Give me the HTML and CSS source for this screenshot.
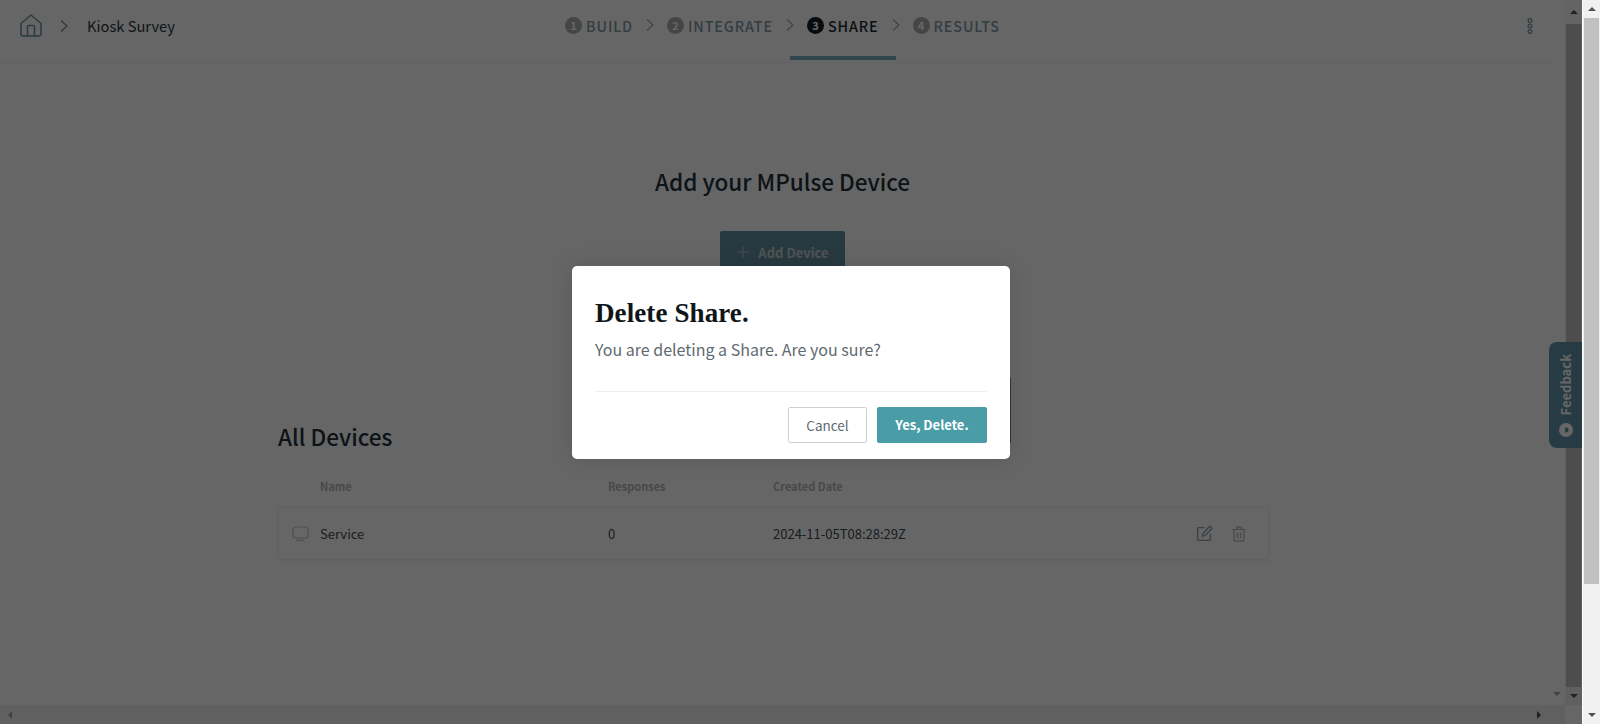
FILE: index.html
```html
<!DOCTYPE html>
<html lang="en">
<head>
<meta charset="utf-8">
<title>Kiosk Survey</title>
<link rel="stylesheet" href="styles.css">
</head>
<body>
<div class="viewport">
  <div class="viewport-main">
    <div class="app">
      <header class="topbar">
        <div class="crumbs">
          <svg class="home-icon" viewBox="0 0 22 23" width="22" height="23" fill="none" stroke="#6f92a3" stroke-width="1.5" stroke-linejoin="round"><path d="M1 9.5 11 1l10 8.5V20a2 2 0 0 1-2 2H3a2 2 0 0 1-2-2z"/><path d="M7.5 22V12.5a1 1 0 0 1 1-1h5a1 1 0 0 1 1 1V22"/></svg>
          <svg class="crumb-chev" viewBox="0 0 8 12" width="8" height="12" fill="none" stroke="#6f8390" stroke-width="1.1"><path d="M1 .5 7 6l-6 5.5"/></svg>
          <span class="crumb-title">Kiosk Survey</span>
        </div>
        <nav class="steps">
          <div class="step"><span class="step-num">1</span><span class="step-label">BUILD</span></div>
          <svg class="step-chev" viewBox="0 0 8 12" width="8" height="12" fill="none" stroke="#95a3ab" stroke-width="1.1"><path d="M1 .5 7 6l-6 5.5"/></svg>
          <div class="step"><span class="step-num">2</span><span class="step-label">INTEGRATE</span></div>
          <svg class="step-chev" viewBox="0 0 8 12" width="8" height="12" fill="none" stroke="#95a3ab" stroke-width="1.1"><path d="M1 .5 7 6l-6 5.5"/></svg>
          <div class="step step-active"><span class="step-num">3</span><span class="step-label">SHARE</span></div>
          <svg class="step-chev" viewBox="0 0 8 12" width="8" height="12" fill="none" stroke="#95a3ab" stroke-width="1.1"><path d="M1 .5 7 6l-6 5.5"/></svg>
          <div class="step"><span class="step-num">4</span><span class="step-label">RESULTS</span></div>
        </nav>
        <svg class="kebab" viewBox="0 0 6 16" width="6" height="16" fill="none" stroke="#7397a8" stroke-width="1.2"><circle cx="3" cy="2.5" r="1.9"/><circle cx="3" cy="8" r="1.9"/><circle cx="3" cy="13.5" r="1.9"/></svg>
      </header>
      <section class="add-section">
        <h2 class="add-title">Add your MPulse Device</h2>
        <button class="add-btn"><svg viewBox="0 0 14 14" width="14" height="14" fill="none" stroke="#b9c4c9" stroke-width="1"><path d="M7 1v12M1 7h12"/></svg>Add Device</button>
      </section>
      <section class="devices">
        <h2 class="devices-title">All Devices</h2>
        <div class="table-head">
          <span class="col-name">Name</span>
          <span class="col-resp">Responses</span>
          <span class="col-date">Created Date</span>
        </div>
        <div class="table-row">
          <svg class="monitor" viewBox="0 0 17 16" width="17" height="16" fill="none" stroke="#c2c4c6" stroke-width="1.2"><rect x="1" y="1" width="15" height="11" rx="2.5"/><path d="M4.5 14.5c1-.6 7-.6 8 0"/></svg>
          <span class="cell-name">Service</span>
          <span class="cell-resp">0</span>
          <span class="cell-date">2024-11-05T08:28:29Z</span>
          <span class="row-actions">
            <svg viewBox="0 0 16 16" width="17" height="17" fill="none" stroke="#8aa0ab" stroke-width="1.2"><path d="M8 2.5H2.5a1 1 0 0 0-1 1v10a1 1 0 0 0 1 1h10a1 1 0 0 0 1-1V8"/><path d="M6 10.5l.6-2.6L13 1.2l2 2-6.4 6.7z"/></svg>
            <svg viewBox="0 0 14 16" width="14" height="16" fill="none" stroke="#b0b4b7" stroke-width="1.2"><path d="M.5 3.5h13M5 3.5V1.2h4v2.3M2 3.5V14a1.2 1.2 0 0 0 1.2 1.2h7.6A1.2 1.2 0 0 0 12 14V3.5M5.5 6.5v6M8.5 6.5v6"/></svg>
          </span>
        </div>
      </section>
    </div>
    <div class="bar inner-bar">
      <div class="bar-btn"><span class="arrow-up"></span></div>
      <div class="bar-thumb"></div>
      <div class="bar-btn"><span class="arrow-down"></span></div>
    </div>
  </div>
  <div class="hbar"><span class="arrow-left"></span><span class="arrow-right"></span></div>
  <span class="pane-arrow"></span>
  <div class="behind-modal"></div>
  <aside class="feedback">
    <span class="feedback-text">Feedback</span>
    <svg class="feedback-face" viewBox="0 0 14 14" width="14" height="14"><circle cx="7" cy="7" r="7" fill="#fff"/><path d="M6 4.5h1.2a2.5 2.5 0 0 1 0 5H6z" fill="#5f94a8"/></svg>
  </aside>
  <div class="overlay">
    <div class="modal">
      <h3 class="modal-title">Delete Share.</h3>
      <p class="modal-text">You are deleting a Share. Are you sure?</p>
      <div class="modal-actions">
        <button class="btn btn-cancel">Cancel</button>
        <button class="btn btn-yes">Yes, Delete.</button>
      </div>
    </div>
  </div>
</div>
<div class="bar outer-bar">
  <div class="bar-btn"><span class="arrow-up"></span></div>
  <div class="bar-thumb outer-thumb"></div>
  <div class="bar-spacer"></div>
  <div class="bar-btn"><span class="arrow-down"></span></div>
</div>
</body>
</html>
```
FILE: styles.css
```css
* { box-sizing: border-box; }
html, body { margin: 0; height: 100%; }
body {
  display: flex;
  height: 724px;
  overflow: hidden;
  background: #fff;
  font-family: "Noto Sans CJK SC", "Noto Sans", sans-serif;
  color: #1c2a33;
}
.viewport {
  position: relative;
  width: 1583px;
  height: 724px;
  display: flex;
  flex-direction: column;
  border-right: 1px solid #fff;
}
.viewport-main { flex: 1; display: flex; min-height: 0; }
.app { flex: 1; min-width: 0; display: flex; flex-direction: column; }

.topbar {
  position: relative;
  height: 63px;
  flex: none;
  display: flex;
  align-items: flex-start;
  justify-content: center;
  border-bottom: 1px solid #f2f2f2;
  margin-right: 14px;
}
.crumbs {
  position: absolute;
  left: 20px;
  top: 14px;
  display: flex;
  align-items: center;
}
.home-icon { margin-right: 18px; }
.crumb-chev { margin-right: 19px; }
.crumb-title { font-size: 14.7px; line-height: 22px; color: #2b3740; }
.steps { display: flex; align-items: center; height: 60px; margin-left: 14px; }
.step {
  display: flex;
  align-items: center;
  height: 60px;
  padding: 0 17px 6px;
  border-bottom: 4px solid transparent;
  gap: 4px;
  color: #8298a5;
}
.step-num {
  width: 17px;
  height: 17px;
  border-radius: 50%;
  background: #a9adaf;
  color: #fff;
  font-size: 11px;
  font-weight: 700;
  line-height: 17px;
  text-align: center;
}
.step-label { font-size: 14.3px; letter-spacing: .9px; font-weight: 500; }
.step-active { color: #1c2a33; border-bottom-color: #77afc6; }
.step-active .step-num { background: #16202a; }
.step-chev { margin: 0 -4px 10px -4px; flex: none; }
.kebab { position: absolute; left: 1527px; top: 18px; }

.add-section { display: flex; flex-direction: column; align-items: center; }
.add-title { margin: 101px 0 0; font-size: 22.5px; line-height: 34px; font-weight: 500; color: #22303a; }
.add-btn {
  margin-top: 33px;
  width: 125px;
  height: 42px;
  border: 0;
  border-radius: 2px;
  background: #6491a2;
  color: #c6d0d5;
  font: 600 13px "Noto Sans CJK SC", sans-serif;
  display: flex;
  align-items: center;
  justify-content: center;
  gap: 8px;
}
.devices { margin: 0 0 0 278px; width: 991px; padding-top: 146px; }
.devices-title { margin: 0; font-size: 22.5px; line-height: 34px; font-weight: 500; color: #22303a; }
.table-head {
  display: grid;
  grid-template-columns: 288px 165px 1fr;
  padding-left: 42px;
  margin-top: 23px;
  font-size: 11px;
  line-height: 20px;
  font-weight: 600;
  color: #b3b6b8;
}
.table-row {
  margin-top: 11px;
  height: 53px;
  border: 1px solid #f1f1f1;
  border-radius: 4px;
  display: grid;
  grid-template-columns: 28px 288px 165px 1fr auto;
  align-items: center;
  padding: 0 22px 0 13px;
  font-size: 13px;
  color: #3d4a53;
  box-shadow: 0 1px 4px rgba(0,0,0,.08);
}
.row-actions { display: flex; gap: 19px; align-items: center; }
.monitor { display: block; }

.bar { width: 17px; flex: none; display: flex; flex-direction: column; background: #f1f1f1; }
.bar-btn { height: 18px; flex: none; display: flex; align-items: center; justify-content: center; }
.inner-bar .bar-btn:first-child { height: 24px; background: #fafafa; }
.bar-thumb { flex: 1; background: #c1c1c1; margin: 0 1px; }
.outer-thumb { flex: none; height: 566px; }
.bar-spacer { flex: 1; }
.arrow-up { border: 4px solid transparent; border-top: 0; border-bottom: 4px solid #505050; width: 0; height: 0; }
.arrow-down { border: 4px solid transparent; border-bottom: 0; border-top: 4px solid #505050; width: 0; height: 0; }
.hbar {
  height: 19px;
  flex: none;
  margin-right: 17px;
  display: flex;
  align-items: center;
  justify-content: space-between;
  padding: 0 24px 0 8px;
  background: #f1f1f1;
}
.arrow-left { border: 4px solid transparent; border-left: 0; border-right: 4px solid #a3a3a3; width: 0; height: 0; }
.arrow-right { border: 4px solid transparent; border-right: 0; border-left: 4px solid #505050; width: 0; height: 0; }
.pane-arrow {
  position: absolute;
  left: 1553px;
  top: 692px;
  width: 0;
  height: 0;
  border: 4px solid transparent;
  border-bottom: 0;
  border-top: 4px solid #a3a3a3;
}
.behind-modal {
  position: absolute;
  left: 900px;
  top: 378px;
  width: 111px;
  height: 65px;
  background: #5f94a8;
}

.feedback {
  position: absolute;
  left: 1549px;
  top: 342px;
  width: 33px;
  height: 106px;
  background: #5f94a8;
  border-radius: 8px 0 0 8px;
  display: flex;
  flex-direction: column;
  align-items: center;
  padding-top: 12px;
  gap: 8px;
}
.feedback-text {
  writing-mode: vertical-rl;
  transform: rotate(180deg);
  font-size: 13px;
  font-weight: 700;
  line-height: 15px;
  color: #fff;
}
.feedback-face { flex: none; }

.overlay {
  position: absolute;
  inset: 0;
  width: 1582px;
  background: rgba(0,0,0,.6);
  display: flex;
  align-items: center;
  justify-content: center;
}
.modal {
  width: 438px;
  height: 193px;
  background: #fff;
  border-radius: 5px;
  padding: 27px 23px 15px;
  display: flex;
  flex-direction: column;
  box-shadow: 0 0 24px rgba(0,0,0,.12);
}
.modal-title {
  margin: 0;
  font: 700 27px/40px "Liberation Serif", serif;
  letter-spacing: .1px;
  color: #101518;
}
.modal-text { margin: 5px 0 0; font-size: 16px; line-height: 22px; color: #5f6a70; }
.modal-actions {
  margin-top: 31px;
  padding-top: 15px;
  border-top: 1px solid #eeeeee;
  display: flex;
  justify-content: flex-end;
  gap: 10px;
}
.btn { height: 36px; border-radius: 2px; font: 400 13.5px "Noto Sans CJK SC", sans-serif; }
.btn-cancel { width: 79px; background: #fff; border: 1px solid #cfcfcf; color: #5f6a70; }
.btn-yes { width: 110px; background: #4a9ca6; border: 0; color: #fff; font-weight: 700; font-size: 13px; }
```
